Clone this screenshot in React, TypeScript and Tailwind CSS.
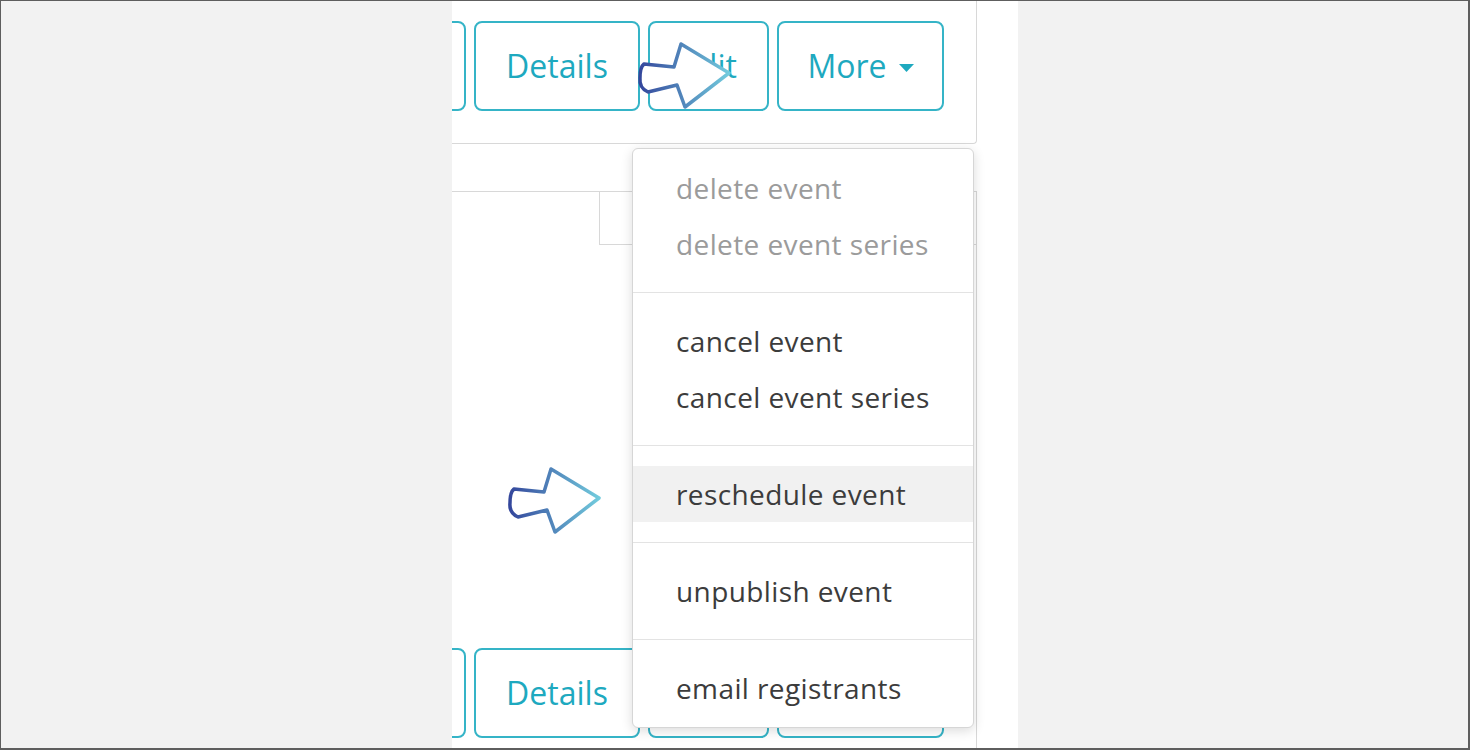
import React from 'react';

// Event card actions with the "More" dropdown open, plus two pointer callouts

const font = { fontFamily: '"Open Sans", "Liberation Sans", sans-serif' };

function ActionButton({ label, width, caret }: { label: string; width: string; caret?: boolean }) {
  return (
    <button
      className={`${width} h-[90px] shrink-0 rounded-[8px] border-2 border-[#35b4c7] bg-white text-[32px] text-[#1ea9bf] flex items-center justify-center gap-[12px]`}
    >
      {label}
      {caret && (
        <svg width="15" height="8" viewBox="0 0 15 8" className="mt-[4px]">
          <path d="M0 0 L15 0 L7.5 8 Z" fill="#1ea9bf" />
        </svg>
      )}
    </button>
  );
}

// the lower row sits mostly under the open menu, so only Details shows a label
function ButtonRow({ covered }: { covered?: boolean }) {
  return (
    <div className="flex justify-end gap-2 pr-8">
      <ActionButton label="" width="w-[130px]" />
      <ActionButton label="Details" width="w-[166px]" />
      <ActionButton label={covered ? '' : 'Edit'} width="w-[121px]" />
      <ActionButton label={covered ? '' : 'More'} width="w-[167px]" caret={!covered} />
    </div>
  );
}

function Pointer({ id, className }: { id: string; className: string }) {
  return (
    <svg width="100" height="76" viewBox="0 0 100 76" className={`absolute ${className}`}>
      <defs>
        <linearGradient id={id} x1="0" y1="0" x2="1" y2="0">
          <stop offset="0" stopColor="#34479c" />
          <stop offset="1" stopColor="#72cbdd" />
        </linearGradient>
      </defs>
      <path
        d="M9 27 L39 30 L46 7 L94 36 L50 70 L42 48 L13 55 Q4 51 5 41 Q5 30 9 27 Z"
        fill="#ffffff"
        stroke={`url(#${id})`}
        strokeWidth="3.5"
        strokeLinejoin="round"
      />
    </svg>
  );
}

const groups = [
  { items: ['delete event', 'delete event series'], muted: true },
  { items: ['cancel event', 'cancel event series'] },
  { items: ['reschedule event'], active: true },
  { items: ['unpublish event'] },
  { items: ['email registrants'] },
];

function MoreMenu() {
  return (
    <div className="absolute left-[631px] top-[147px] w-[342px] rounded-[6px] border border-[#d6d6d6] bg-white py-[11px] shadow-[0_3px_12px_rgba(0,0,0,0.14)]">
      {groups.map((g, gi) => (
        <div key={gi}>
          {gi > 0 && <div className="my-5 h-px bg-[#e3e3e3]" />}
          {g.items.map((item) => (
            <div
              key={item}
              className={`h-14 flex items-center pl-[43px] text-[28px] tracking-[0.4px] ${
                g.muted ? 'text-[#9b9b9b]' : 'text-[#3c3c3c]'
              } ${g.active ? 'bg-[#f1f1f1]' : ''}`}
            >
              {item}
            </div>
          ))}
        </div>
      ))}
    </div>
  );
}

export default function App() {
  return (
    <div
      className="w-[1470px] h-[750px] border-t border-l border-r-2 border-b-2 border-[#5e5e5e] bg-[#f2f2f2] overflow-hidden"
      style={font}
    >
      <div className="relative w-full h-full">
        <div className="ml-[451px] w-[566px] h-full bg-white pr-[41px] overflow-hidden flex flex-col">
          {/* top card */}
          <div className="border-r border-b border-[#d8d8d8] rounded-br-[4px] pt-[20px] pb-[32px]">
            <ButtonRow />
          </div>

          {/* second card */}
          <div className="mt-[47px] flex-1 border-t border-r border-[#d8d8d8] flex flex-col">
            <div className="flex h-[53px]">
              <div className="w-[147px]" />
              <div className="flex-1 border-l border-b border-[#d8d8d8]" />
            </div>
            <div className="h-[403px]" />
            <ButtonRow covered />
          </div>
        </div>

        <MoreMenu />
        <Pointer id="ptrA" className="left-[634px] top-[36px]" />
        <Pointer id="ptrB" className="left-[504px] top-[461px]" />
      </div>
    </div>
  );
}
